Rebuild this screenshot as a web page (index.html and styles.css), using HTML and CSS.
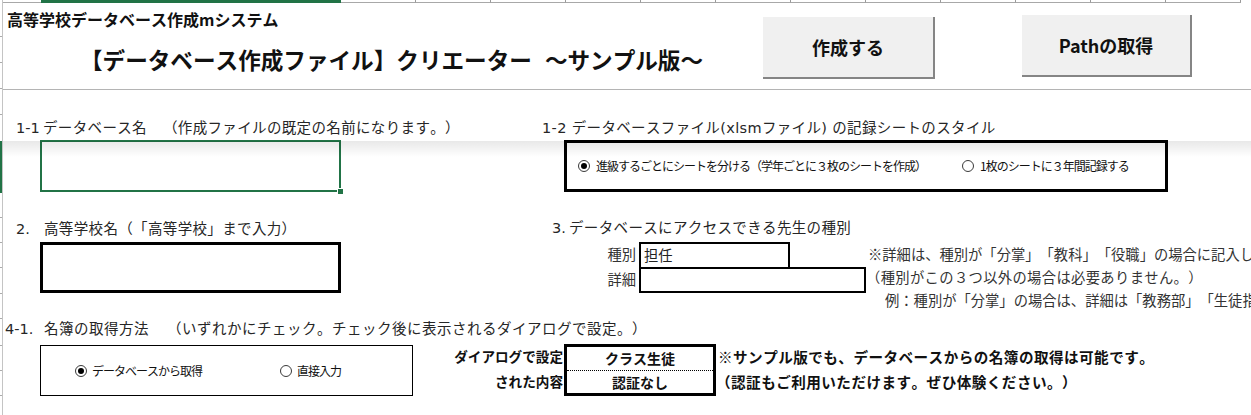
FILE: index.html
```html
<!DOCTYPE html>
<html lang="ja">
<head>
<meta charset="utf-8">
<title>高等学校データベース作成mシステム</title>
<link rel="stylesheet" href="styles.css">
</head>
<body>
<div class="sheet">
  <div class="rowheads">
    <div class="rh h36"></div>
    <div class="rh h25"></div>
    <div class="rh h25"></div>
    <div class="rh h25"></div>
    <div class="rh h25 nob"></div>
    <div class="rh sel h52"></div>
    <div class="rh h24"></div>
    <div class="rh h24"></div>
    <div class="rh h24"></div>
    <div class="rh h25"></div>
    <div class="rh h24"></div>
    <div class="rh h26"></div>
    <div class="rh h24"></div>
    <div class="rh h24"></div>
  </div>
  <div class="pane">
    <div class="colheads">
      <div class="ch ch-first"></div>
      <div class="ch ch-sel"></div>
      <div class="ch"></div><div class="ch"></div><div class="ch"></div><div class="ch"></div>
      <div class="ch"></div><div class="ch"></div><div class="ch"></div><div class="ch"></div>
      <div class="ch"></div><div class="ch"></div><div class="ch"></div><div class="ch"></div>
    </div>
    <div class="content">
      <header class="head">
        <div class="titles">
          <div class="system">高等学校データベース作成mシステム</div>
          <div class="title"><span>【データベース作成ファイル】クリエーター</span><span class="title-sub">～サンプル版～</span></div>
        </div>
        <button class="btn btn-make">作成する</button>
        <button class="btn btn-path">Pathの取得</button>
      </header>

      <section class="sec sec1">
        <div class="col-left">
          <div class="label lbl-11"><span class="num num-11">1-1</span>データベース名<span class="gap"></span>（作成ファイルの既定の名前になります。）</div>
          <div class="cellbox green"><span class="handle"></span></div>
        </div>
        <div class="col-right">
          <div class="label lbl-12">1-2 データベースファイル(xlsmファイル) の記録シートのスタイル</div>
          <div class="optbox optbox-12">
            <label class="opt opt-12a"><span class="radio on"></span><span class="opt-text">進級するごとにシートを分ける（学年ごとに３枚のシートを作成）</span></label>
            <label class="opt"><span class="radio"></span><span class="opt-text">1枚のシートに３年間記録する</span></label>
          </div>
        </div>
      </section>

      <section class="sec sec2">
        <div class="col-left">
          <div class="label lbl-2"><span class="num num-2">2.</span>高等学校名（「高等学校」まで入力）</div>
          <div class="cellbox black"></div>
        </div>
        <div class="col-right">
          <div class="label lbl-3"><span class="num num-3">3.</span>データベースにアクセスできる先生の種別</div>
          <div class="form3">
            <div class="fcol">
              <div class="frow frow1"><span class="flabel">種別</span><span class="fbox fbox1">担任</span></div>
              <div class="frow frow2"><span class="flabel">詳細</span><span class="fbox fbox2"></span></div>
            </div>
            <div class="notes">
              <div class="note note1">※詳細は、種別が「分掌」「教科」「役職」の場合に記入して</div>
              <div class="note note2">（種別がこの３つ以外の場合は必要ありません。）</div>
              <div class="note note3">例：種別が「分掌」の場合は、詳細は「教務部」「生徒指導</div>
            </div>
          </div>
        </div>
      </section>

      <section class="sec sec4">
        <div class="label lbl-4"><span class="num num-4">4-1.</span>名簿の取得方法<span class="gap gap4"></span>（いずれかにチェック。チェック後に表示されるダイアログで設定。）</div>
        <div class="row4">
          <div class="optbox optbox-4">
            <label class="opt opt-4a"><span class="radio on"></span><span class="opt-text">データベースから取得</span></label>
            <label class="opt"><span class="radio"></span><span class="opt-text">直接入力</span></label>
          </div>
          <div class="dlg-labels">
            <div>ダイアログで設定</div>
            <div>された内容</div>
          </div>
          <div class="dlg-box">
            <div class="dlg-cell dlg-top">クラス生徒</div>
            <div class="dlg-cell">認証なし</div>
          </div>
          <div class="dlg-notes">
            <div>※サンプル版でも、データベースからの名簿の取得は可能です。</div>
            <div class="dlg-note2">（認証もご利用いただけます。ぜひ体験ください。）</div>
          </div>
        </div>
      </section>
    </div>
  </div>
  <div class="pane-shadow"></div>
</div>
</body>
</html>
```

FILE: styles.css
```css
* { box-sizing: border-box; }

html, body {
  margin: 0;
  padding: 0;
  background: #ffffff;
}

body {
  font-family: "Noto Sans CJK JP", "Noto Sans", sans-serif;
  color: #262626;
  text-spacing-trim: space-all;
  font-kerning: none;
}

.sheet {
  position: relative;
  width: 1251px;
  height: 415px;
  overflow: hidden;
  display: flex;
  background: #ffffff;
}

/* row header strip (left edge) */
.rowheads {
  width: 3px;
  flex: none;
  border-right: 1px solid #c4c4c4;
  display: flex;
  flex-direction: column;
}
.rh { flex: none; border-bottom: 1px solid #ababab; }
.rh.nob { border-bottom: none; }
.rh.sel { background: #217346; border-bottom: none; }
.h24 { height: 25px; }
.h25 { height: 26px; }
.h26 { height: 27px; }
.h36 { height: 37px; }
.h52 { height: 52px; }

.pane {
  flex: 1;
  display: flex;
  flex-direction: column;
  min-width: 0;
}

/* column header strip (top edge) */
.colheads {
  height: 3px;
  display: flex;
  flex: none;
}
.ch {
  width: 75px;
  flex: none;
  height: 3px;
  border-bottom: 1px solid #a8a8a8;
  border-right: 1px solid #9a9a9a;
}
.ch-first { width: 38px; border-right: none; }
.ch-sel { width: 300px; background: #217346; border: none; }

.content {
  flex: 1;
  display: flex;
  flex-direction: column;
}

/* header */
.head {
  height: 87px;
  flex: none;
  display: flex;
  align-items: flex-start;
  border-bottom: 1px solid #b4b4b4;
}
.titles { width: 760px; flex: none; }
.system {
  margin: 6px 0 0 4px;
  font-size: 16px;
  font-weight: 700;
  line-height: 20px;
  color: #111;
}
.title {
  margin: 16px 0 0 77px;
  font-size: 22.6px;
  font-weight: 700;
  line-height: 30px;
  color: #111;
  white-space: nowrap;
}
.title-sub { margin-left: 13px; }

.btn {
  flex: none;
  height: 62px;
  padding: 0;
  background: #f0f0f0;
  border: none;
  border-right: 2px solid #858585;
  border-bottom: 2px solid #858585;
  font-family: "Noto Sans CJK JP", "Noto Sans", sans-serif;
  font-size: 18px;
  font-weight: 700;
  color: #111;
  line-height: 24px;
}
.btn-make { width: 172px; margin-top: 14px; }
.btn-path { width: 170px; margin-top: 12px; margin-left: 87px; }

/* sections */
.sec { display: flex; flex: none; }
.sec1 { height: 102px; }
.sec2 { height: 126px; }
.sec4 { flex-direction: column; flex: 1; }

.col-left { width: 537px; flex: none; }
.col-right { flex: 1; min-width: 0; }

.label {
  font-family: "DejaVu Sans", "Noto Sans CJK JP", sans-serif;
  font-size: 14.5px;
  letter-spacing: 0.35px;
  line-height: 20px;
  white-space: nowrap;
  color: #262626;
}
.num { display: inline-block; letter-spacing: 0; }
.gap { display: inline-block; width: 16px; }
.gap4 { width: 18px; }

.lbl-11 { margin-top: 28px; padding-left: 13px; }
.num-11 { width: 27px; }
.lbl-12 { margin-top: 28px; padding-left: 2px; }
.lbl-2 { margin-top: 27px; padding-left: 13px; }
.num-2 { width: 28px; }
.lbl-3 { margin-top: 26px; padding-left: 12px; }
.num-3 { width: 17px; }
.lbl-4 { margin-top: 1px; padding-left: 2px; letter-spacing: 0.5px; }
.num-4 { width: 39px; }

.cellbox {
  position: relative;
  width: 301px;
  margin-left: 37px;
}
.cellbox.green {
  height: 52px;
  margin-top: 2px;
  border: 2px solid #217346;
}
.cellbox.black {
  height: 51px;
  margin-top: 3px;
  border: 3px solid #000;
}
.handle {
  position: absolute;
  right: -5px;
  bottom: -5px;
  width: 7px;
  height: 7px;
  background: #217346;
  border: 1px solid #fff;
}

/* option boxes */
.optbox {
  display: flex;
  align-items: center;
  border: 3px solid #000;
  background: #fff;
}
.optbox-12 {
  width: 604px;
  height: 52px;
  margin: 2px 0 0 24px;
  padding-left: 11px;
}
.opt {
  display: flex;
  align-items: center;
  flex: none;
  white-space: nowrap;
}
.opt-12a { width: 384px; }
.opt-text {
  font-size: 12px;
  letter-spacing: -1px;
  line-height: 16px;
  color: #111;
  margin-left: 6px;
}
.radio {
  width: 12px;
  height: 12px;
  flex: none;
  border: 1px solid #3a3a3a;
  border-radius: 50%;
  background: #fff;
  display: flex;
  align-items: center;
  justify-content: center;
}
.radio.on::after {
  content: "";
  width: 6px;
  height: 6px;
  border-radius: 50%;
  background: #000;
}

/* section 3 form */
.form3 { display: flex; margin-top: 4px; }
.fcol { width: 326px; flex: none; }
.frow { display: flex; }
.frow1 { height: 25px; }
.frow2 { height: 26px; }
.flabel {
  width: 99px;
  flex: none;
  text-align: right;
  padding-right: 3px;
  font-size: 14.3px;
  line-height: 23px;
  color: #333;
}
.frow2 .flabel { line-height: 24px; }
.fbox {
  border: 2px solid #000;
  font-size: 14.3px;
  line-height: 21px;
  padding-left: 3px;
  color: #222;
}
.fbox1 { width: 151px; height: 25px; border-bottom: none; }
.fbox2 { width: 227px; height: 26px; }

.notes { flex: 1; min-width: 0; }
.note {
  font-size: 14.3px;
  line-height: 23px;
  white-space: nowrap;
  color: #333;
}
.note1 { padding-left: 2px; }
.note2 { padding-left: 0; letter-spacing: 0.35px; }
.note3 { padding-left: 19px; }

/* section 4 */
.row4 { display: flex; margin-top: 5px; }
.optbox-4 {
  width: 373px;
  height: 51px;
  margin: 1px 0 0 37px;
  border-width: 1.5px;
  padding-left: 34px;
}
.opt-4a { width: 205px; }
.optbox-4 .opt-text { margin-left: 5px; }

.dlg-labels {
  width: 150px;
  flex: none;
  text-align: right;
  font-size: 13.6px;
  font-weight: 700;
  line-height: 25px;
  color: #111;
  white-space: nowrap;
}
.dlg-box {
  width: 152px;
  height: 52px;
  flex: none;
  margin-left: 1px;
  border: 3px solid #000;
  display: flex;
  flex-direction: column;
}
.dlg-cell {
  flex: 1;
  display: flex;
  align-items: center;
  justify-content: center;
  font-size: 14px;
  font-weight: 700;
  color: #111;
}
.dlg-top { border-bottom: 1px dotted #000; }
.dlg-notes {
  margin-left: 2px;
  font-size: 14.6px;
  font-weight: 700;
  letter-spacing: 0.45px;
  line-height: 25px;
  white-space: nowrap;
  color: #111;
}
.dlg-note2 { margin-left: -2px; }

/* frozen-pane shadow overlay */
.pane-shadow {
  position: absolute;
  left: 3px;
  right: 0;
  top: 141px;
  height: 16px;
  background: linear-gradient(to bottom, rgba(0,0,0,0.09), rgba(0,0,0,0));
  pointer-events: none;
}
```
